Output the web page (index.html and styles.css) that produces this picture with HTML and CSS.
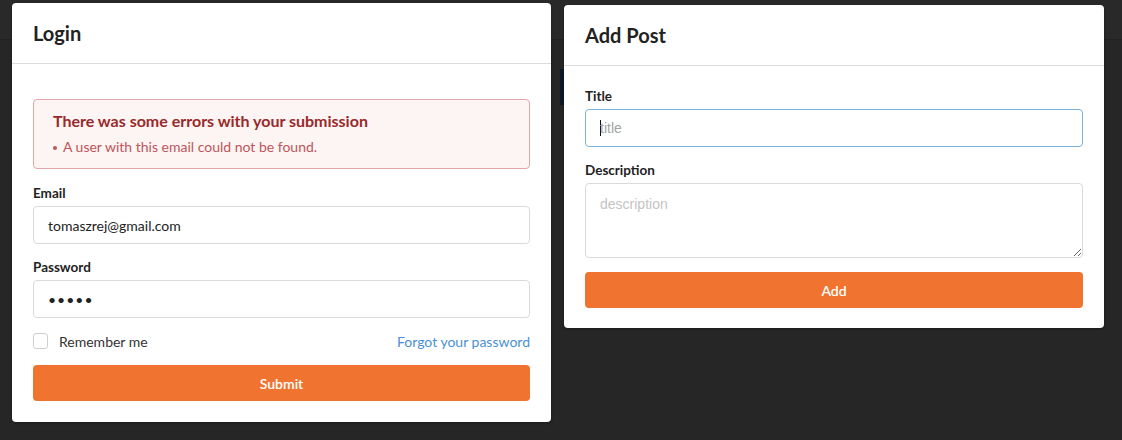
FILE: index.html
```html
<!DOCTYPE html>
<html lang="en">
<head>
<meta charset="utf-8">
<title>Login / Add Post</title>
<link rel="stylesheet" href="styles.css">
</head>
<body>
<div class="topbar"></div>
<div class="backdrop-block"></div>
<main class="page">
  <section class="card card-login">
    <header class="card-header"><h2>Login</h2></header>
    <div class="card-body">
      <div class="alert">
        <div class="alert-title">There was some errors with your submission</div>
        <ul class="alert-list">
          <li>A user with this email could not be found.</li>
        </ul>
      </div>
      <label class="label">Email</label>
      <input class="field" type="text" value="tomaszrej@gmail.com">
      <label class="label label-gap">Password</label>
      <input class="field field-pass" type="password" value="12345">
      <div class="row">
        <label class="check"><span class="box"></span><span>Remember me</span></label>
        <a class="link" href="#">Forgot your password</a>
      </div>
      <button class="btn">Submit</button>
    </div>
  </section>

  <section class="card card-post">
    <header class="card-header"><h2>Add Post</h2></header>
    <div class="card-body card-body-post">
      <label class="label">Title</label>
      <div class="field field-focus"><span class="caret"></span><span class="ph">title</span></div>
      <label class="label label-gap">Description</label>
      <textarea class="area" placeholder="description"></textarea>
      <button class="btn btn-add">Add</button>
    </div>
  </section>
</main>
</body>
</html>
```

FILE: styles.css
```css
* { box-sizing: border-box; }

html, body {
  margin: 0;
  height: 100%;
}

body {
  background: #262626;
  font-family: "Lato", "Liberation Sans", sans-serif;
  color: #222;
  position: relative;
  overflow: hidden;
}

.topbar {
  position: absolute;
  left: 0;
  top: 0;
  right: 0;
  height: 40px;
  background: #292929;
  border-bottom: 1px solid #222;
}

.backdrop-block {
  position: absolute;
  left: 560px;
  top: 69px;
  width: 6px;
  height: 36px;
  background: #0c1a28;
}

.page {
  position: relative;
  display: flex;
  align-items: flex-start;
  gap: 13px;
  padding: 3px 0 0 12px;
}

.card {
  background: #fff;
  border-radius: 4px;
  box-shadow: 0 1px 3px rgba(0, 0, 0, 0.35);
}

.card-login { width: 539px; }
.card-post { width: 540px; margin-top: 2px; }

.card-header {
  height: 61px;
  padding: 0 21px;
  display: flex;
  align-items: center;
  border-bottom: 1px solid #dcdcdc;
}

.card-header h2 {
  margin: 0;
  font-size: 20px;
  font-weight: 700;
  color: #222;
  line-height: 24px;
}

.card-body {
  padding: 35px 21px 21px;
  display: flex;
  flex-direction: column;
}

.card-body-post {
  padding-top: 20px;
  padding-bottom: 20px;
}

.alert {
  border: 1px solid #e4a5a8;
  background: #fdf4f4;
  border-radius: 4px;
  padding: 11px 16px 11px 19px;
  margin-bottom: 14px;
}

.alert-title {
  font-size: 16px;
  font-weight: 700;
  line-height: 20px;
  color: #982a2a;
}

.alert-list {
  list-style: none;
  margin: 6px 0 0;
  padding: 0;
}

.alert-list li {
  position: relative;
  padding-left: 10px;
  font-size: 14px;
  line-height: 20px;
  color: #c0555a;
}

.alert-list li::before {
  content: "";
  position: absolute;
  left: 0;
  top: 9px;
  width: 4px;
  height: 4px;
  border-radius: 50%;
  background: #c0555a;
}

.label {
  display: block;
  font-size: 13.5px;
  font-weight: 700;
  line-height: 20px;
  color: #222;
  margin-bottom: 3px;
}

.label-gap { margin-top: 13px; }

.field {
  display: flex;
  align-items: center;
  width: 100%;
  height: 38px;
  border: 1px solid #dadada;
  border-radius: 4px;
  padding: 0 14px;
  font-family: "Lato", "Liberation Sans", sans-serif;
  font-size: 14px;
  color: #222;
  background: #fff;
  outline: none;
}

.field-pass {
  font-size: 14px;
  letter-spacing: 1px;
}

.field-focus {
  border-color: #7fb2da;
  position: relative;
}

.caret {
  display: inline-block;
  width: 1px;
  height: 16px;
  background: #111;
  margin-right: -1px;
}

.ph {
  font-family: "Liberation Sans", Arial, sans-serif;
  font-size: 14px;
  color: #a3a3a3;
}

.area {
  display: block;
  width: 100%;
  height: 75px;
  border: 1px solid #dadada;
  border-radius: 4px;
  padding: 10px 14px;
  font-family: "Liberation Sans", Arial, sans-serif;
  font-size: 14px;
  line-height: 20px;
  resize: vertical;
  outline: none;
  background: #fff;
}

.area::placeholder { color: #c4c4c4; }

.row {
  display: flex;
  align-items: center;
  justify-content: space-between;
  margin-top: 13px;
  height: 20px;
}

.check {
  display: flex;
  align-items: center;
  gap: 11px;
  font-size: 14px;
  color: #333;
}

.box {
  width: 15px;
  height: 16px;
  border: 1px solid #cfcfcf;
  border-radius: 3px;
  background: #fff;
}

.link {
  font-size: 14px;
  color: #4a8fd4;
  text-decoration: none;
}

.btn {
  display: block;
  width: 100%;
  height: 36px;
  margin-top: 14px;
  border: none;
  border-radius: 4px;
  background: #f0742f;
  color: #fff;
  font-family: "Lato", "Liberation Sans", sans-serif;
  font-size: 14px;
  font-weight: 600;
}

.btn-add { margin-top: 14px; }
```
